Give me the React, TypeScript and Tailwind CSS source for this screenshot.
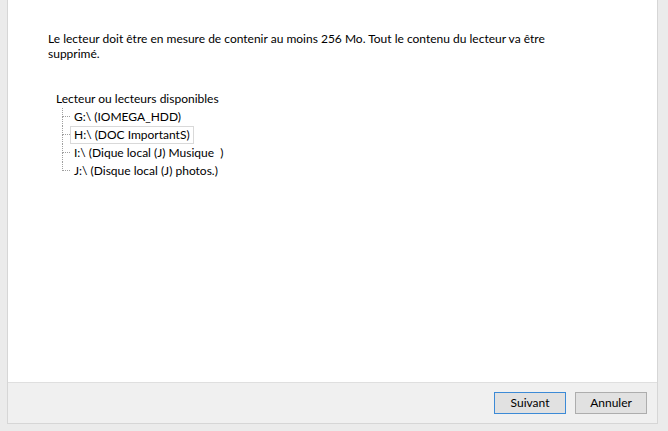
import React from "react";

const drives = [
  "G:\\ (IOMEGA_HDD)",
  "H:\\ (DOC ImportantS)",
  "I:\\ (Dique local (J) Musique  )",
  "J:\\ (Disque local (J) photos.)",
];

export default function App() {
  return (
    <div
      className="w-[668px] h-[431px] bg-[#ebebeb] flex pl-[7px] pr-[10px] pb-[7px] text-[12px] text-black"
      style={{ fontFamily: "Lato, 'Noto Sans', sans-serif" }}
    >
      <div className="flex-1 flex flex-col border-l border-r border-b border-[#d6d6d6]">
        <div className="flex-1 bg-white pl-[40px] pt-[31px]">
          <p className="leading-[15px] w-[520px]">
            Le lecteur doit être en mesure de contenir au moins 256 Mo. Tout le contenu du lecteur va être supprimé.
          </p>
          <div className="mt-[29px] pl-[8px]">
            <div className="h-[18px] flex items-center">Lecteur ou lecteurs disponibles</div>
            <div className="pl-[6px]">
              {drives.map((d, i) => (
                <div key={d} className="h-[18px] flex">
                  <div className="w-[8px] flex flex-col">
                    <div className="h-[9px] border-l border-b border-dotted border-[#a0a0a0]" />
                    <div
                      className={
                        i < drives.length - 1
                          ? "flex-1 border-l border-dotted border-[#a0a0a0]"
                          : "flex-1"
                      }
                    />
                  </div>
                  <div
                    className={
                      i === 1
                        ? "h-[18px] flex items-center px-[3px] border border-[#d9d9d9] whitespace-pre"
                        : "h-[18px] flex items-center px-[3px] border border-transparent whitespace-pre"
                    }
                  >
                    {d}
                  </div>
                </div>
              ))}
            </div>
          </div>
        </div>
        <div className="h-[41px] bg-[#f0f0f0] border-t border-[#dfdfdf] flex justify-end items-start pt-[9px] pr-[10px] gap-[9px]">
          <button className="w-[72px] h-[22px] bg-[#e1e1e1] border border-[#3c8ad6] flex items-center justify-center">
            Suivant
          </button>
          <button className="w-[72px] h-[22px] bg-[#e1e1e1] border border-[#adadad] flex items-center justify-center">
            Annuler
          </button>
        </div>
      </div>
    </div>
  );
}
